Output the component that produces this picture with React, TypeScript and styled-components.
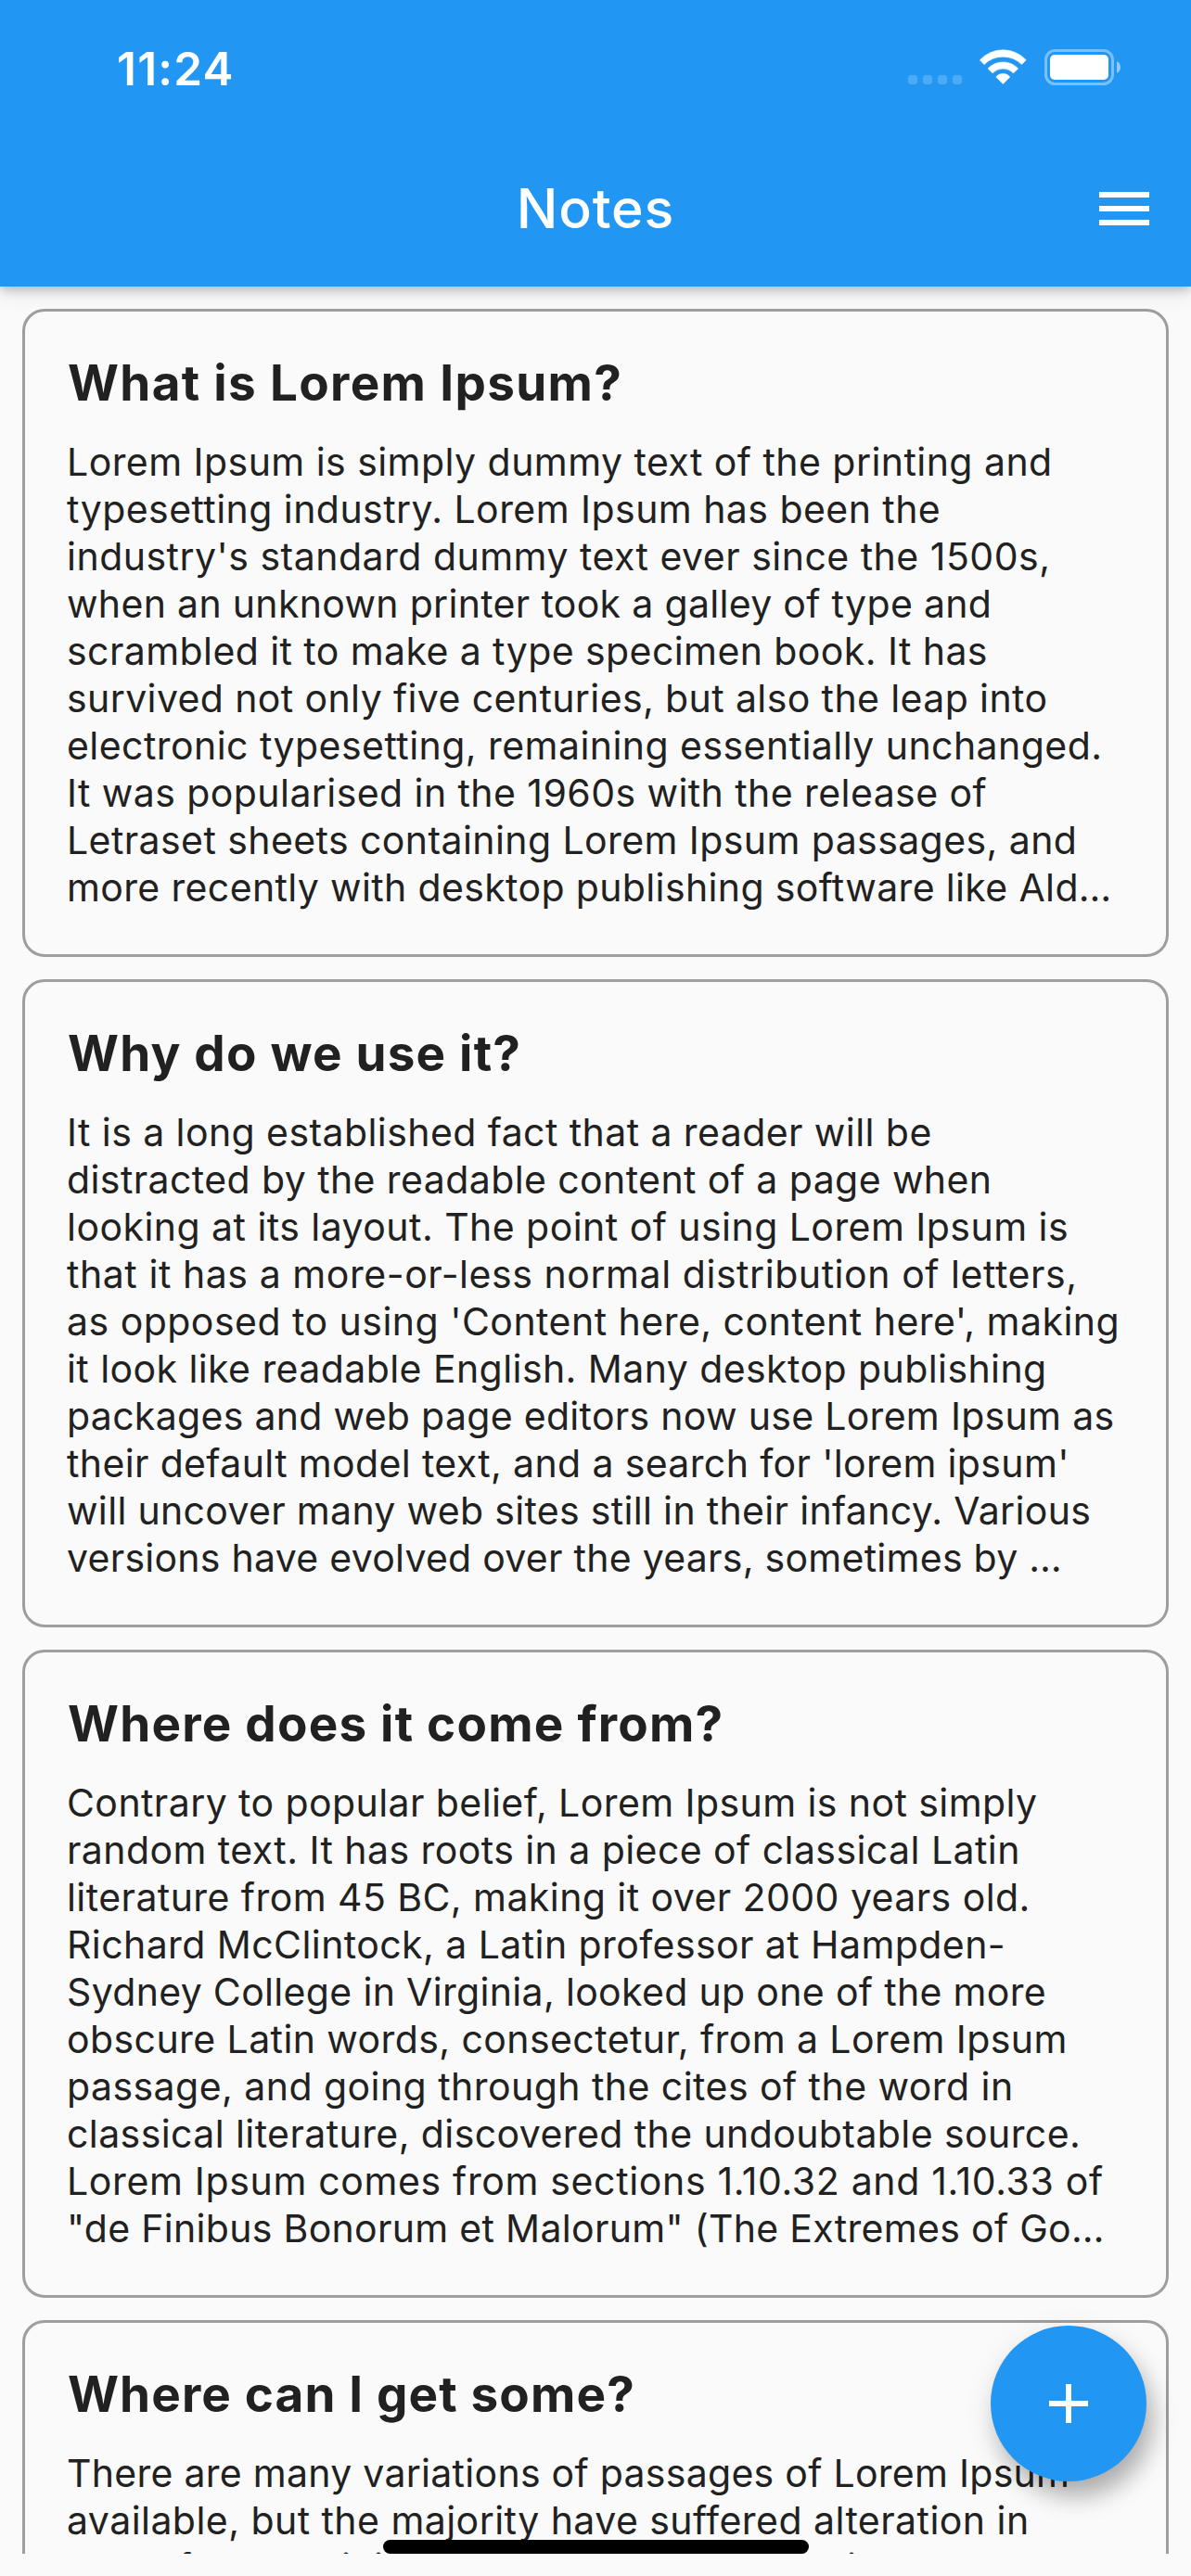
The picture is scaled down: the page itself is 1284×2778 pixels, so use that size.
import React from "react";
import styled, { createGlobalStyle } from "styled-components";

const GlobalStyle = createGlobalStyle`
  * { box-sizing: border-box; }
  body {
    margin: 0;
    background: #fafafa;
    font-family: Inter, "Liberation Sans", sans-serif;
  }
`;

const Screen = styled.div`
  position: relative;
  display: flex;
  flex-direction: column;
  width: 1284px;
  height: 2778px;
  overflow: hidden;
  background: #fafafa;
`;

const Header = styled.header`
  position: relative;
  z-index: 1;
  display: flex;
  flex-direction: column;
  flex: none;
  height: 309px;
  background: #2196f3;
  color: #fff;
  box-shadow:
    0 3px 10px rgba(0, 0, 0, 0.2),
    0 8px 20px rgba(0, 0, 0, 0.11);
`;

const StatusBar = styled.div`
  display: flex;
  align-items: center;
  justify-content: space-between;
  height: 141px;
  padding: 4px 76px 0 126px;
`;

const Clock = styled.span`
  padding-top: 2px;
  font-size: 49.5px;
  font-weight: 600;
  line-height: 60px;
  letter-spacing: 1.2px;
`;

const Indicators = styled.div`
  display: flex;
  align-items: center;
  gap: 19px;

  svg { display: block; }
`;

const AppBar = styled.div`
  display: grid;
  grid-template-columns: 1fr auto 1fr;
  align-items: center;
  height: 168px;
`;

const ScreenTitle = styled.h1`
  grid-column: 2;
  margin: 0;
  font-size: 59px;
  font-weight: 500;
  line-height: 70px;
  letter-spacing: 0.85px;
`;

const MenuButton = styled.button`
  justify-self: end;
  display: flex;
  padding: 0;
  margin-right: 36px;
  border: 0;
  background: none;
  color: inherit;
`;

const NoteList = styled.main`
  display: flex;
  flex-direction: column;
  gap: 24px;
  height: 2445px;
  padding: 24px 24px 0;
  overflow: hidden;
`;

const Card = styled.article`
  flex: none;
  display: flex;
  flex-direction: column;
  gap: 28px;
  height: 699px;
  padding: 46px 0 0 45px;
  border: 3px solid #9e9e9e;
  border-radius: 24px;
  color: #212121;
`;

const NoteTitle = styled.h2<{ $tracking: number }>`
  margin: 0 0 0 1px;
  font-size: 53px;
  font-weight: 700;
  line-height: 63px;
  letter-spacing: ${(p) => p.$tracking}px;
  white-space: pre;
`;

const NoteBody = styled.div`
  font-size: 41px;
  line-height: 51px;
`;

const Line = styled.div<{ $tracking: number }>`
  letter-spacing: ${(p) => p.$tracking}px;
  white-space: pre;
`;

const AddButton = styled.button`
  position: absolute;
  z-index: 2;
  left: 1068px;
  top: 2508px;
  display: flex;
  align-items: center;
  justify-content: center;
  width: 168px;
  height: 168px;
  padding: 0;
  border: 0;
  border-radius: 50%;
  background: #2196f3;
  box-shadow:
    8px 18px 26px -2px rgba(0, 0, 0, 0.27),
    2px 8px 34px rgba(0, 0, 0, 0.09);
`;

const HomeIndicator = styled.div`
  position: absolute;
  z-index: 3;
  left: 413px;
  top: 2739px;
  width: 459px;
  height: 15px;
  border-radius: 8px;
  background: #000;
`;

type Note = { title: string; tracking: number; lines: [string, number][] };

const notes: Note[] = [
  {
    title: "What is Lorem Ipsum?",
    tracking: 1.33,
    lines: [
      ["Lorem Ipsum is simply dummy text of the printing and", 0.449],
      ["typesetting industry. Lorem Ipsum has been the", 0.446],
      ["industry's standard dummy text ever since the 1500s,", 0.486],
      ["when an unknown printer took a galley of type and", 0.318],
      ["scrambled it to make a type specimen book. It has", 0.417],
      ["survived not only five centuries, but also the leap into", 0.389],
      ["electronic typesetting, remaining essentially unchanged.", 0.446],
      ["It was popularised in the 1960s with the release of", 0.426],
      ["Letraset sheets containing Lorem Ipsum passages, and", 0.416],
      ["more recently with desktop publishing software like Ald…", 0.36],
    ],
  },
  {
    title: "Why do we use it?",
    tracking: 1.2,
    lines: [
      ["It is a long established fact that a reader will be", 0.421],
      ["distracted by the readable content of a page when", 0.41],
      ["looking at its layout. The point of using Lorem Ipsum is", 0.455],
      ["that it has a more-or-less normal distribution of letters,", 0.56],
      ["as opposed to using 'Content here, content here', making", 0.477],
      ["it look like readable English. Many desktop publishing", 0.424],
      ["packages and web page editors now use Lorem Ipsum as", 0.304],
      ["their default model text, and a search for 'lorem ipsum'", 0.363],
      ["will uncover many web sites still in their infancy. Various", 0.322],
      ["versions have evolved over the years, sometimes by …", 0.27],
    ],
  },
  {
    title: "Where does it come from?",
    tracking: 1.22,
    lines: [
      ["Contrary to popular belief, Lorem Ipsum is not simply", 0.421],
      ["random text. It has roots in a piece of classical Latin", 0.437],
      ["literature from 45 BC, making it over 2000 years old.", 0.433],
      ["Richard McClintock, a Latin professor at Hampden-", 0.424],
      ["Sydney College in Virginia, looked up one of the more", 0.331],
      ["obscure Latin words, consectetur, from a Lorem Ipsum", 0.418],
      ["passage, and going through the cites of the word in", 0.449],
      ["classical literature, discovered the undoubtable source.", 0.411],
      ["Lorem Ipsum comes from sections 1.10.32 and 1.10.33 of", 0.652],
      ["\"de Finibus Bonorum et Malorum\" (The Extremes of Go…", 0.308],
    ],
  },
  {
    title: "Where can I get some?",
    tracking: 1.13,
    lines: [
      ["There are many variations of passages of Lorem Ipsum", 0.279],
      ["available, but the majority have suffered alteration in", 0.45],
      ["some form, by injected humour, or randomised words", 0.41],
    ],
  },
];

const NoSignalIcon = () => (
  <svg width="58" height="39" viewBox="0 0 58 39" fill="#fff" fillOpacity="0.2">
    {[0, 16, 32, 48].map((x) => (
      <rect key={x} x={x} y="28" width="10" height="10" rx="3" />
    ))}
  </svg>
);

const WifiIcon = () => (
  <svg width="51" height="39" viewBox="0 0 51 39" fill="#fff" stroke="#fff" strokeWidth="0.6" strokeLinejoin="round">
    <path d="M.4 11.7A33.9 33.9 0 0 1 50.2 11.7L45.6 16.6A28.7 28.7 0 0 0 5 16.6Z" />
    <path d="M9 20.9A22.5 22.5 0 0 1 41.6 20.9L36.6 25.8A15.9 15.9 0 0 0 14 25.8Z" />
    <path d="M17.8 30A9.6 9.6 0 0 1 32.8 30L25.3 37.5Z" />
  </svg>
);

const BatteryIcon = () => (
  <svg width="82" height="39" viewBox="0 0 82 39" fill="#fff">
    <rect x="1.5" y="1.5" width="72" height="36" rx="10" fill="none" stroke="#fff" strokeOpacity="0.4" strokeWidth="3" />
    <rect x="6" y="6" width="63" height="27" rx="5" />
    <path d="M78 13.3C80.6 14.4 82 16.8 82 19.5S80.6 24.6 78 25.7Z" fillOpacity="0.5" />
  </svg>
);

const MenuIcon = () => (
  <svg width="72" height="72" viewBox="0 0 24 24" fill="#fff">
    <path d="M3 18h18v-2H3v2zm0-5h18v-2H3v2zm0-7v2h18V6H3z" />
  </svg>
);

const PlusIcon = () => (
  <svg width="72" height="72" viewBox="0 0 24 24" fill="#fff">
    <path d="M19 13h-6v6h-2v-6H5v-2h6V5h2v6h6v2z" />
  </svg>
);

export default function App() {
  return (
    <Screen>
      <GlobalStyle />
      <Header>
        <StatusBar>
          <Clock>11:24</Clock>
          <Indicators>
            <NoSignalIcon />
            <WifiIcon />
            <BatteryIcon />
          </Indicators>
        </StatusBar>
        <AppBar>
          <ScreenTitle>Notes</ScreenTitle>
          <MenuButton aria-label="Menu">
            <MenuIcon />
          </MenuButton>
        </AppBar>
      </Header>
      <NoteList>
        {notes.map((note) => (
          <Card key={note.title}>
            <NoteTitle $tracking={note.tracking}>{note.title}</NoteTitle>
            <NoteBody>
              {note.lines.map(([text, tracking]) => (
                <Line key={text} $tracking={tracking}>
                  {text}
                </Line>
              ))}
            </NoteBody>
          </Card>
        ))}
      </NoteList>
      <AddButton aria-label="Add note">
        <PlusIcon />
      </AddButton>
      <HomeIndicator />
    </Screen>
  );
}
